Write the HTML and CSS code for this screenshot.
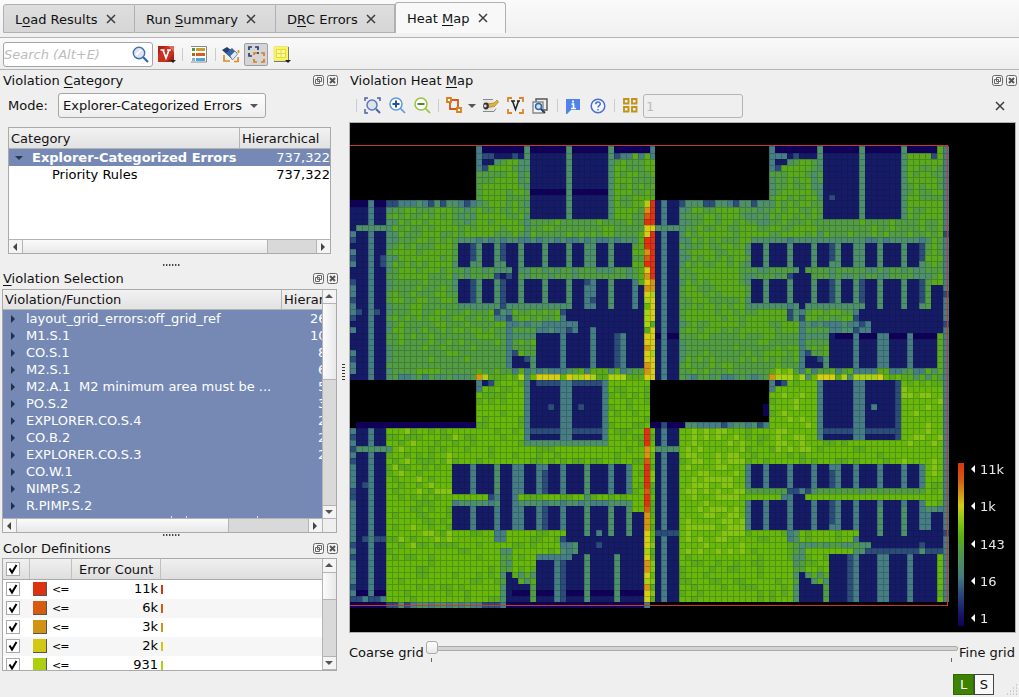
FILE: index.html
```html
<!DOCTYPE html>
<html lang="en">
<head>
<meta charset="utf-8">
<title>Heat Map</title>
<link rel="stylesheet" href="styles.css">
</head>
<body>
<svg width="0" height="0" class="defs">
  <symbol id="x" viewBox="0 0 10 10"><path d="M1 1l8 8M9 1l-8 8" stroke="#3c3c3c" stroke-width="1.5" fill="none"/></symbol>
  <symbol id="float" viewBox="0 0 11 11"><rect x=".5" y=".5" width="10" height="10" rx="2" fill="#f4f4f4" stroke="#666"/><path d="M4.5 2.5h4v4h-4zM2.5 4.5h4v4h-4z" fill="#f4f4f4" stroke="#666"/></symbol>
  <symbol id="close" viewBox="0 0 11 11"><rect x=".5" y=".5" width="10" height="10" rx="2" fill="#f4f4f4" stroke="#666"/><path d="M3 3l5 5M8 3l-5 5" stroke="#555" stroke-width="2"/></symbol>
  <symbol id="check" viewBox="0 0 14 14"><rect x=".5" y=".5" width="13" height="13" fill="#fff" stroke="#aaa"/><path d="M3.5 6.5l2.5 4L10.500 3" stroke="#000" stroke-width="2" fill="none"/></symbol>
</svg>
<div class="window">
  <nav class="tabs">
    <div class="tab t1">L<u>o</u>ad Results<svg><use href="#x"/></svg></div>
    <div class="tab t2">Run <u>S</u>ummary<svg><use href="#x"/></svg></div>
    <div class="tab t3">D<u>R</u>C Errors<svg><use href="#x"/></svg></div>
    <div class="tab active">Heat <u>M</u>ap<svg><use href="#x"/></svg></div>
  </nav>
  <div class="toolbar">
    <div class="search">Search (Alt+E)
      <svg width="17" height="17" viewBox="0 0 17 17"><circle cx="7" cy="7" r="5.700" fill="#dde4ee" stroke="#3f6fb5" stroke-width="1.400"/><path d="M4 9l5-5" stroke="#fff" stroke-width="2"/><path d="M11 11l5 5" stroke="#3566b0" stroke-width="2.200"/></svg>
    </div>
    <svg class="i-v" width="18" height="17" viewBox="0 0 18 17"><path d="M0 0h16v16H0z" fill="#c8301f"/><path d="M0 0h8L0 8zM8 16l8-8v8z" fill="#a92416"/><path d="M10 0h6v6z" fill="#dc6a55"/><path d="M2.500 4h4M9 4h4M5 4l3 8 3-8" stroke="#fff" stroke-width="1.700" fill="none"/><path d="M12 14h6l-3 3z" fill="#222"/></svg>
    <i class="sep s1"></i>
    <svg class="i-list" width="16" height="17" viewBox="0 0 16 17"><path d="M0 .5h15.500v15.500H0" fill="#fff" stroke="#888"/><path d="M1 2h3v3H1z" fill="#4a9a3c"/><path d="M1 7h3v3H1z" fill="#c85a1e"/><path d="M1 12h3v3H1z" fill="#7fb7d9"/><path d="M5 2h9v3H5z" fill="#c99b33"/><path d="M5 7h9v3H5z" fill="#d65d20"/><path d="M5 12h9v3H5z" fill="#4fa5d0"/></svg>
    <i class="sep s2"></i>
    <svg class="i-er" width="18" height="17" viewBox="0 0 18 17"><path d="M2 9v6h6M16.500 4v3M16 11v4.500h-4" stroke="#e08a22" stroke-width="1.700" fill="none"/><path d="M0 4l5-3 8 6-4 5z" fill="#24406e"/><path d="M4 7l6-5 5 5-5 6z" fill="#3c64a8"/><path d="M8 10l5-5 2.500 3-5 6z" fill="#e4eaf4" stroke="#4a6698" stroke-width=".7"/></svg>
    <span class="pressed"><svg width="17" height="17" viewBox="0 0 17 17" fill="none" stroke-width="1.700"><path d="M1 4V1h3M7 1h3v3M1 7v3h3" stroke="#24406e"/><path d="M10 6v2" stroke="#24406e"/><path d="M6 9V7h3M13 7h3v3M6 13v3h3M16 13v3h-3" stroke="#dc7c1c"/></svg></span>
    <svg class="i-grid" width="18" height="17" viewBox="0 0 18 17"><path d="M1 .5h14.500v14.500H1z" fill="#f8f560" stroke="#e8e488"/><path d="M3.500 3.500h9v8h-9zM8 3v9M3 7.500h10" fill="#fcfa9c" stroke="#e2da3c"/><path d="M1 15.500h14.500V1" fill="none" stroke="#777"/><path d="M12 14h6l-3 3z" fill="#222"/></svg>
  </div>
  <main class="main">
    <aside class="left">
      <div class="title first"><span>Violation <u>C</u>ategory</span><svg><use href="#float"/></svg><svg><use href="#close"/></svg></div>
      <div class="mode"><label>Mode:</label><div class="combo">Explorer-Categorized Errors<b class="dn"></b></div></div>
      <div class="tree cat">
        <div class="hdr"><span class="c1">Category</span><span class="c2">Hierarchical</span></div>
        <div class="row sel"><b class="dn dark"></b><strong>Explorer-Categorized Errors</strong><em>737,322</em></div>
        <div class="row child"><span>Priority Rules</span><em>737,322</em></div>
        <div class="hs"><span class="btn"><b class="lt"></b></span><span class="thumb"></span><span class="btn end"><b class="rt"></b></span></div>
      </div>
      <div class="dots d1"></div>
      <div class="title"><span><u>V</u>iolation Selection</span><svg><use href="#float"/></svg><svg><use href="#close"/></svg></div>
      <div class="tree vio">
        <div class="body">
          <div class="hdr"><span class="c1">Violation/Function</span><span class="c2">Hierarchical</span></div>
          <div class="rows">
            <div class="row"><b class="rt"></b><span>layout_grid_errors:off_grid_ref</span><em>261</em></div>
            <div class="row"><b class="rt"></b><span>M1.S.1</span><em>100</em></div>
            <div class="row"><b class="rt"></b><span>CO.S.1</span><em class="n1">80</em></div>
            <div class="row"><b class="rt"></b><span>M2.S.1</span><em class="n1">60</em></div>
            <div class="row"><b class="rt"></b><span>M2.A.1&nbsp; M2 minimum area must be ...</span><em class="n1">50</em></div>
            <div class="row"><b class="rt"></b><span>PO.S.2</span><em class="n1">30</em></div>
            <div class="row"><b class="rt"></b><span>EXPLORER.CO.S.4</span><em class="n1">20</em></div>
            <div class="row"><b class="rt"></b><span>CO.B.2</span><em class="n1">20</em></div>
            <div class="row"><b class="rt"></b><span>EXPLORER.CO.S.3</span><em class="n1">20</em></div>
            <div class="row"><b class="rt"></b><span>CO.W.1</span></div>
            <div class="row"><b class="rt"></b><span>NIMP.S.2</span></div>
            <div class="row"><b class="rt"></b><span>R.PIMP.S.2</span></div>
            <div class="peek"><i></i><i></i><i></i></div>
          </div>
          <div class="hs"><span class="btn"><b class="lt"></b></span><span class="thumb"></span><span class="btn end"><b class="rt"></b></span></div>
        </div>
        <div class="vs"><span class="btn"><b class="up"></b></span><span class="thumb"></span><span class="btn end"><b class="dn"></b></span><span class="corner"></span></div>
      </div>
      <div class="dots d2"></div>
      <div class="title third"><span>Color Definitions</span><svg><use href="#float"/></svg><svg><use href="#close"/></svg></div>
      <div class="tree col">
        <div class="body">
          <div class="chdr"><span class="k1"><svg><use href="#check"/></svg></span><span class="k2"></span><span class="k3">Error Count</span></div>
          <div class="crow"><svg><use href="#check"/></svg><i class="sw c-red"></i><s>&lt;=</s><em>11k</em><i class="bar c-red"></i></div>
          <div class="crow alt"><svg><use href="#check"/></svg><i class="sw c-or"></i><s>&lt;=</s><em>6k</em><i class="bar c-or"></i></div>
          <div class="crow"><svg><use href="#check"/></svg><i class="sw c-am"></i><s>&lt;=</s><em>3k</em><i class="bar c-am"></i></div>
          <div class="crow alt"><svg><use href="#check"/></svg><i class="sw c-ye"></i><s>&lt;=</s><em>2k</em><i class="bar c-ye"></i></div>
          <div class="crow"><svg><use href="#check"/></svg><i class="sw c-li"></i><s>&lt;=</s><em>931</em><i class="bar c-li"></i></div>
        </div>
        <div class="vs"><span class="btn"><b class="up"></b></span><span class="thumb"></span><span class="btn end"><b class="dn"></b></span></div>
      </div>
    </aside>
    <div class="split"><div class="vdots"></div></div>
    <section class="right">
      <div class="title first"><span>Violation Heat <u>M</u>ap</span><svg><use href="#float"/></svg><svg><use href="#close"/></svg></div>
      <div class="htools">
        <i class="sep"></i>
        <svg class="z1" width="17" height="17" viewBox="0 0 17 17" fill="none"><path d="M1 4V1h3M13 1h3v3M1 12v4h3" stroke="#4a62a8" stroke-width="1.500"/><circle cx="8" cy="8" r="5" fill="#dde3ee" stroke="#5a78bd" stroke-width="1.500"/><path d="M12 12l4 4" stroke="#4a62a8" stroke-width="2"/></svg>
        <svg class="z2" width="17" height="17" viewBox="0 0 17 17" fill="none"><circle cx="7" cy="7" r="6" fill="#fff" stroke="#5b9bd8" stroke-width="1.500"/><path d="M3.500 7h7M7 3.500v7" stroke="#27509a" stroke-width="2"/><path d="M11.500 11.500l4.500 4.500" stroke="#5b9bd8" stroke-width="1.700"/></svg>
        <svg class="z3" width="17" height="17" viewBox="0 0 17 17" fill="none"><circle cx="7" cy="7" r="6" fill="#fff" stroke="#96c43c" stroke-width="1.500"/><path d="M3.500 7h7" stroke="#4c8c20" stroke-width="2"/><path d="M11.500 11.500l4.500 4.500" stroke="#96c43c" stroke-width="1.700"/></svg>
        <i class="sep"></i>
        <svg class="z4" width="17" height="17" viewBox="0 0 17 17" fill="none" stroke-width="1.800"><path d="M3 3h9v9H4V3" stroke="#cf5a1a"/><path d="M1 1h4v4H1zM11 11h4v4h-4z" fill="#fff" stroke="#d8801c"/></svg>
        <b class="dn"></b>
        <svg class="z5" width="17" height="15" viewBox="0 0 17 15"><path d="M1 1.500h10M1 13.500h11l2-3" fill="none" stroke="#888"/><path d="M1 2h11v11H1z" fill="#e6e6e6"/><path d="M5 6l7-1 3-3 1.500 2-4 4.500-7 1z" fill="#dcb23c" stroke="#a87c24" stroke-width=".7"/><ellipse cx="4" cy="8" rx="2.800" ry="3.400" fill="#333"/><circle cx="3.300" cy="8" r="1.400" fill="#ddd"/></svg>
        <svg class="z6" width="17" height="17" viewBox="0 0 17 17" fill="none"><path d="M1 5V1h4M12 1h4v4M1 12v4h4M16 12v4h-4" stroke="#e08426" stroke-width="1.800"/><path d="M4 4h4M10 4h3M5.500 4l3 8.500L11.500 4" stroke="#222" stroke-width="1.500"/></svg>
        <svg class="z7" width="16" height="16" viewBox="0 0 16 16" fill="none"><path d="M4 1h11v11H4z" fill="#eee" stroke="#555" stroke-width="1.400"/><path d="M1 4h10v11H1z" fill="#f5f5f5" stroke="#888" stroke-width="1.400"/><circle cx="6.500" cy="8.500" r="3" fill="#cfe1f4" stroke="#2e65a8" stroke-width="1.500"/><path d="M9 11l4 4" stroke="#1c3f78" stroke-width="2"/></svg>
        <i class="sep"></i>
        <svg class="z8" width="15" height="16" viewBox="0 0 15 16"><path d="M0 1h14v11H5l-4 4H0z" fill="#4f83ea"/><path d="M7 2.500v2M5.500 6H7.500v4M5 10.500h5" stroke="#fff" stroke-width="1.700" fill="none"/></svg>
        <svg class="z9" width="16" height="16" viewBox="0 0 16 16" fill="none"><circle cx="8" cy="8" r="6.800" fill="#f4f7ff" stroke="#4a6fd0" stroke-width="1.500"/><path d="M5.700 6.300c0-3 4.600-3 4.600-.3 0 1.600-2.300 1.600-2.300 3.500M8 11v1.600" stroke="#4a6fd0" stroke-width="1.500"/></svg>
        <i class="sep"></i>
        <svg class="z10" width="15" height="15" viewBox="0 0 15 15"><path d="M1 1h4.500v4.500H1zM9 1h4.500v4.500H9zM1 9h4.500v4.500H1zM9 9h4.500v4.500H9z" fill="none" stroke="#c09418" stroke-width="1.900"/></svg>
        <div class="spin">1</div>
        <svg class="xx"><use href="#x"/></svg>
      </div>
      <div class="map">
        <canvas id="heat" width="665" height="509"></canvas>
        <div class="legend"><div class="ramp"></div>
          <ul><li><b></b>11k</li><li><b></b>1k</li><li><b></b>143</li><li><b></b>16</li><li><b></b>1</li></ul></div>
      </div>
      <div class="slider"><span>Coarse grid</span><div class="track"><i class="knob"></i><i class="tick a"></i><i class="tick b"></i></div><span class="fine">Fine grid</span></div>
      <div class="status"><span class="on">L</span><span class="off">S</span>
        <svg width="12" height="12" viewBox="0 0 12 12"><path d="M10 1h1M7 4h1M10 4h1M4 7h1M7 7h1M10 7h1M1 10h1M4 10h1M7 10h1M10 10h1" stroke="#aaa"/></svg></div>
    </section>
  </main>
</div>
<script src="heat.js"></script>
</body>
</html>
```
FILE: styles.css
```css
* { box-sizing: border-box; }
body { margin: 0; font: 13px/16px "DejaVu Sans", sans-serif; color: #111; background: #efefef; }
.defs { position: absolute; }
.window { width: 1019px; height: 697px; overflow: hidden; display: flex; flex-direction: column; }
u { text-decoration: underline; text-underline-offset: 2px; text-decoration-thickness: 1px; }
em, s, i { font-style: normal; text-decoration: none; }
svg { flex: none; display: block; }
.tabs { height: 38px; padding: 2px 3px 0; display: flex; align-items: flex-start; background: linear-gradient(#fafafa, #f0f0f0); border-bottom: 1px solid #b4b4b4; }
.tab { height: 29px; margin-top: 2px; display: flex; align-items: center; border: 1px solid #b0b0b0; border-left-width: 0; background: linear-gradient(#dedede, #d6d6d6); padding: 3px 0 0 12px; white-space: pre; }
.tab svg { width: 10px; height: 10px; margin-left: 8px; margin-top: -2px; }
.t1 { width: 132px; border-left-width: 1px; border-top-left-radius: 3px; padding-left: 11px; }
.t2 { width: 141px; padding-left: 11px; }
.t3 { width: 119px; padding-left: 11px; }
.active { width: 111px; height: 31px; margin-top: 0; border-left-width: 1px; border-bottom: 0; border-radius: 3px 3px 0 0; background: #f8f8f8; padding: 2px 0 0 11px; }
.active svg { margin-left: 9px; }
.toolbar { height: 32px; flex: none; display: flex; align-items: center; padding: 2px 0 0 3px; background: linear-gradient(#f9f9f9, #eee); border-bottom: 1px solid #b4b4b4; }
.search { width: 150px; height: 25px; border: 1px solid #a6a6a6; border-radius: 3px; background: #fff; color: #bcbcbc; font-style: italic; display: flex; align-items: center; justify-content: space-between; padding-right: 3px; white-space: nowrap; }
.i-v { margin-left: 5px; }
.sep { width: 1px; height: 13px; background: #ccc; border-right: 0; flex: none; }
.s1 { margin-left: 6px; } .i-list { margin-left: 8px; } .s2 { margin-left: 8px; } .i-er { margin-left: 6px; }
.pressed { width: 24px; height: 23px; margin-left: 4px; border: 1px solid #a0a0a0; border-radius: 2px; background: #d5d5d5; display: flex; align-items: center; justify-content: center; }
.i-grid { margin-left: 5px; }
.main { flex: 1; display: flex; min-height: 0; }
.left { width: 340px; flex: none; }
.split { width: 9px; flex: none; }
.vdots { width: 3px; height: 18px; margin: 294px 0 0 2px; background: repeating-linear-gradient(#333 0 1px, transparent 1px 3px); }
.title { height: 20px; display: flex; align-items: center; padding: 0 2px 1px 3px; }
.title.first { margin-top: 1px; }
.title.third { padding: 1px 2px 0 3px; }
.title span { flex: 1; }
.title svg { width: 11px; height: 11px; margin-left: 3px; }
.mode { height: 25px; margin-top: 2px; display: flex; align-items: center; padding-left: 8px; }
.mode label { width: 50px; }
.combo { width: 208px; height: 25px; border: 1px solid #a6a6a6; border-radius: 3px; background: linear-gradient(#fdfdfd, #eee); display: flex; align-items: center; justify-content: space-between; padding: 0 7px 0 4px; white-space: nowrap; }
.dn, .up, .lt, .rt { width: 0; height: 0; border: 4px solid transparent; flex: none; }
.dn { border-top-color: #555; border-bottom: 0; }
.up { border-bottom-color: #555; border-top: 0; }
.lt { border-right-color: #444; border-left: 0; }
.rt { border-left-color: #444; border-right: 0; }
.tree { border: 1px solid #aaa; background: #fff; overflow: hidden; }
.hdr { display: flex; background: linear-gradient(#f2f2f2, #e2e2e2); border-bottom: 1px solid #b4b4b4; line-height: 20px; overflow: hidden; }
.hdr .c2 { border-left: 1px solid #b4b4b4; padding-left: 2px; flex: 1; overflow: hidden; }
.cat { width: 323px; height: 127px; margin: 9px 0 0 8px; display: flex; flex-direction: column; }
.cat .hdr { height: 21px; line-height: 22px; }
.cat .c1 { width: 230px; padding-left: 2px; }
.row { height: 17px; line-height: 17px; display: flex; align-items: center; white-space: nowrap; }
.cat em { margin-left: auto; }
.sel { background: #7689b4; color: #fff; }
.sel .dark { margin: 0 9px 0 6px; border-top-color: #263650; }
.child span { padding-left: 43px; }
.child { color: #000; }
.hs { height: 14px; border-top: 1px solid #b4b4b4; background: #d9d9d9; display: flex; margin-top: auto; flex: none; }
.btn { width: 14px; background: #f4f4f4; border-right: 1px solid #b4b4b4; display: flex; align-items: center; justify-content: center; flex: none; }
.hs .btn { padding-right: 2px; }
.hs .end { margin-left: auto; border-right: 0; border-left: 1px solid #b4b4b4; padding-right: 2px; }
.hs .thumb { width: 245px; background: linear-gradient(#fbfbfb, #e8e8e8); border-right: 1px solid #b4b4b4; }
.dots { width: 18px; height: 2px; margin: 0 0 0 163px; background: repeating-linear-gradient(90deg, #444 0 1px, #aaa 1px 2px, transparent 2px 3px); }
.d1 { margin-top: 10px; margin-bottom: 3px; }
.vio { width: 335px; height: 244px; margin: 0 0 0 2px; display: flex; }
.body { flex: 1; min-width: 0; display: flex; flex-direction: column; }
.vio .hdr { height: 20px; flex: none; }
.vio .c1 { width: 278px; flex: none; padding-left: 2px; }
.rows { height: 208px; background: #7689b4; color: #fff; overflow: hidden; }
.rows .row { position: relative; overflow: hidden; padding-left: 8px; }
.rows .rt { border-left-color: #1f2f4c; margin-right: 11px; }
.rows em { position: absolute; left: 307px; }
.rows .n1 { left: 315px; }
.peek { display: flex; padding-left: 168px; gap: 14px; height: 4px; align-items: flex-end; }
.peek i { width: 1px; height: 2px; background: #dfe5f0; }
.peek i:last-child { margin-left: 56px; }
.vio .hs { height: 14px; }
.vio .hs .thumb { width: 212px; }
.vs { width: 14px; flex: none; border-left: 1px solid #b4b4b4; background: #d9d9d9; display: flex; flex-direction: column; }
.vs .btn { width: 13px; height: 14px; border-right: 0; border-bottom: 1px solid #b4b4b4; padding: 0 1px 1px 0; }
.vs .thumb { height: 76px; background: linear-gradient(90deg, #fbfbfb, #e8e8e8); border-bottom: 1px solid #b4b4b4; }
.vs .end { margin-top: auto; border-top: 1px solid #b4b4b4; }
.corner { height: 13px; background: #efefef; flex: none; }
.d2 { margin-top: 1px; margin-bottom: 2px; }
.col { width: 335px; height: 113px; margin-left: 2px; display: flex; }
.chdr { height: 21px; flex: none; display: flex; line-height: 21px; background: linear-gradient(#f0f0f0, #dedede); border-bottom: 1px solid #aaa; }
.chdr span { border-right: 1px solid #c0c0c0; }
.k1 { width: 27px; padding: 3px 0 0 3px; } .k2 { width: 42px; } .k3 { width: 89px; padding-left: 7px; }
.chdr svg, .crow svg { width: 14px; height: 14px; }
.crow { height: 19px; flex: none; display: flex; align-items: center; padding: 0 0 1px 3px; color: #000; }
.alt { background: #f6f6f6; }
.sw { width: 14px; height: 14px; margin-left: 13px; border-right: 1px solid #555; border-bottom: 1px solid #555; }
.crow s { width: 22px; padding-left: 5px; font-size: 11px; letter-spacing: -1px; margin-top: 2px; }
.crow em { width: 89px; text-align: right; }
.bar { width: 2px; height: 9px; margin-left: 3px; }
.c-red { background-color: #dc3210; } .c-or { background-color: #d65a10; } .c-am { background-color: #d29214; } .c-ye { background-color: #d2c814; } .c-li { background-color: #acd010; }
.col .btn { height: 14px; } .col .thumb { height: 27px; }
.right { width: 670px; display: flex; flex-direction: column; }
.right .title { padding: 0 2px 1px 1px; flex: none; }
.htools { height: 31px; flex: none; display: flex; align-items: center; padding: 0 0 2px 7px; }
.z1 { margin-left: 7px; } .z2, .z3 { margin-left: 8px; } .z3 + .sep { margin-left: 7px; }
.z4 { margin-left: 7px; } .htools .dn { margin-left: 5px; } .z5 { margin-left: 6px; } .z6 { margin-left: 8px; } .z7 { margin-left: 8px; }
.z7 + .sep { margin-left: 9px; } .z8 { margin-left: 8px; } .z9 { margin-left: 9px; } .z9 + .sep { margin-left: 8px; } .z10 { margin-left: 8px; }
.spin { width: 100px; height: 24px; margin-left: 5px; margin-top: 1px; border: 1px solid #b4b4b4; border-radius: 3px; line-height: 23px; padding-left: 2px; color: #bbb; }
.xx { width: 10px; height: 10px; margin-left: auto; margin-right: 14px; }
.map { width: 667px; height: 511px; border: 1px solid #b0b0b0; position: relative; flex: none; background: #000; }
.map canvas { display: block; }
.legend { position: absolute; left: 608px; top: 340px; display: flex; color: #e8e8e8; }
.ramp { width: 6px; height: 163px; background: linear-gradient(#dc3210, #d25a14 10%, #d29214 18%, #d2cc14 26%, #84c414 36%, #5ab00e 45%, #509a44 54%, #4a8868 63%, #447a80 70%, #2b4a78 80%, #141a66 92%, #10005a); }
.legend ul { list-style: none; margin: -2px 0 0 7px; padding: 0; }
.legend li { height: 37.300px; display: flex; align-items: flex-start; line-height: 17px; gap: 5px; }
.legend b { border: 4px solid transparent; border-right-color: #fff; border-left: 0; margin-top: 4px; }
.slider { height: 40px; flex: none; display: flex; align-items: center; }
.slider span { width: 77px; flex: none; white-space: nowrap; }
.slider .fine { width: 60px; margin-left: 1px; }
.track { width: 532px; flex: none; height: 5px; border: 1px solid #aaa; border-radius: 2px; background: #d3d3d3; position: relative; margin-top: -9px; }
.knob { position: absolute; left: -1px; top: -6px; width: 12px; height: 13px; border: 1px solid #aaa; border-radius: 3px; background: linear-gradient(#fff, #e8e8e8); }
.tick { position: absolute; top: 11px; width: 1px; height: 4px; background: #666; }
.tick.a { left: 4px; } .tick.b { right: 5px; }
.status { display: flex; padding-left: 604px; align-items: flex-start; margin-top: 1px; }
.status span { width: 21px; height: 21px; border: 1px solid #2f6a00; text-align: center; line-height: 20px; }
.on { background: #3d8200; color: #fff; }
.status .off { border-color: #444; background: #f8f8f8; width: 20px; }
.status svg { margin: 10px 0 0 12px; }
```
FILE: heat.js
```js
const COLS = 100, ROWS = 77;
const COLORS = {
  '.': '#000', a: '#10005a', b: '#151b66', c: '#2c4c7a', d: '#467e84', e: '#4d906a',
  f: '#529c42', g: '#5aaa1c', h: '#68b80c', i: '#86c414', j: '#aad214', k: '#d6ce14',
  l: '#d69414', m: '#d65a14', n: '#de3210'
};
const grid = Array.from({ length: ROWS }, () => Array(COLS).fill('g'));
let seed = 71;
const rnd = () => (seed = (seed * 16807) % 2147483647) / 2147483647;

// Fills an inclusive cell range; several levels are mixed at random.
function put(c0, c1, r0, r1, levels) {
  for (let r = r0; r <= r1; r++)
    for (let c = c0; c <= c1; c++)
      grid[r][c] = levels[Math.floor(rnd() * levels.length)];
}
function spans(list, r0, r1, level) {
  for (const [a, b] of list) put(a, b, r0, r1, level);
}
// Paints a vertical run, one character per row.
function column(c, r0, text) {
  [...text].forEach((ch, k) => { grid[r0 + k][c] = ch; });
}

// Ground
put(0, 99, 0, 38, 'ggf');
put(7, 26, 22, 30, 'gff');
put(7, 26, 31, 37, 'ffffg');
put(56, 75, 31, 37, 'ffffg');
put(0, 99, 39, 76, 'hhhg');
put(56, 65, 47, 67, 'hhhii');
put(7, 17, 47, 66, 'hhhhhggghi');
put(71, 77, 40, 50, 'hhhhi');
put(92, 98, 40, 54, 'hhhhi');

for (const o of [0, 49]) {
  // Upper macros
  put(21 + o, 21 + o, 0, 3, 'd'); put(21 + o, 21 + o, 4, 9, 'ef');
  put(22 + o, 28 + o, 0, 0, 'a'); put(22 + o, 28 + o, 1, 1, 'bcbd');
  put(22 + o, 23 + o, 2, 2, 'b'); put(24 + o, 25 + o, 2, 2, 'ef');
  put(22 + o, 22 + o, 3, 3, 'c'); put(22 + o, 23 + o, 4, 5, 'f');
  put(28 + o, 28 + o, 2, 6, 'ef');
  put(29 + o, 43 + o, 0, 11, 'e'); put(29 + o, 29 + o, 4, 14, 'ef');
  spans([[30 + o, 35 + o], [37 + o, 42 + o]], 0, 11, 'b');
  spans([[30 + o, 35 + o], [37 + o, 42 + o]], 0, 0, 'a');
  put(44 + o, 48 + o, 0, 0, 'a'); put(44 + o, 48 + o, 1, 1, 'cddg');
  put(30 + o, 48 + o, 12, 14, 'fffg');
  put(18 + o, 47 + o, 15, 15, 'eed');
  put(17 + o, 20 + o, 10, 12, 'ef');
  // Memory rows
  put(17 + o, 46 + o, 16, 26, 'e');
  put(17 + o, 47 + o, 20, 21, 'ffe');
  put(6 + o, 20 + o, 9, 9, 'edec');
  put(6 + o, 6 + o, 10, 37, 'eef'); put(7 + o, 7 + o, 10, 20, 'egf');
  put(17 + o, 17 + o, 16, 27, 'fe');
  // Lower cluster
  put(24 + o, 26 + o, 26, 28, 'dce');
  put(27 + o, 34 + o, 27, 28, 'ggf'); put(27 + o, 37 + o, 29, 30, 'dde');
  put(35 + o, 36 + o, 27, 29, 'dbc');
  put(36 + o, 48 + o, 27, 30, 'b'); put(35 + o, 37 + o, 29, 30, 'dcd');
  put(26 + o, 26 + o, 29, 37, 'd');
  put(27 + o, 30 + o, 30, 34, 'ffgf');
  put(27 + o, 30 + o, 31, 31, 'e');
  put(27 + o, 27 + o, 34, 34, 'c'); put(27 + o, 28 + o, 35, 35, 'b'); put(29 + o, 29 + o, 35, 35, 'c');
  put(27 + o, 29 + o, 36, 36, 'b'); put(30 + o, 30 + o, 35, 36, 'e');
  put(31 + o, 48 + o, 31, 36, 'd');
  put(26 + o, 48 + o, 37, 37, 'dfgde');
  put(6 + o, 20 + o, 38, 38, 'edfe');
  put(21 + o, 48 + o, 38, 38, 'gghje');
}
const topA = [[18, 19], [22, 23], [26, 27], [29, 31], [33, 35], [37, 38], [41, 42], [44, 46]];
const topB = [[67, 68], [70, 72], [74, 76], [78, 79], [82, 83], [86, 87], [89, 91], [93, 94]];
for (const s of [topA, topB]) { spans(s, 16, 19, 'b'); spans(s, 22, 25, 'b'); }
spans([[20, 20], [25, 25], [80, 80], [95, 95]], 16, 18, 'c');
spans([[20, 20], [25, 25], [80, 80], [95, 95], [85, 85]], 22, 25, 'c');
put(24, 26, 21, 21, 'cb'); put(27, 27, 20, 21, 'b'); put(73, 76, 21, 21, 'cb'); put(75, 75, 20, 26, 'b');
spans([[37, 38], [41, 42], [44, 46], [86, 87], [89, 91], [93, 94]], 26, 26, 'b');
spans([[39, 40]], 22, 26, 'ddc');
put(48, 48, 23, 30, 'b'); put(97, 98, 23, 30, 'b'); put(47, 47, 22, 26, 'd'); put(96, 96, 22, 26, 'f');
put(47, 48, 27, 30, 'b');
spans([[31, 34], [36, 39], [41, 43], [46, 48], [80, 83], [85, 87], [90, 92], [94, 97]], 31, 36, 'b');
put(44, 44, 31, 36, 'c'); put(40, 40, 30, 36, 'd');
spans([[81, 83], [85, 87], [90, 92], [94, 97]], 31, 31, 'a');
spans([[30, 35], [37, 42]], 7, 7, 'a');
grid[8][80] = 'c';
put(31, 39, 38, 38, 'jjkhe'); put(84, 88, 38, 38, 'kj'); put(78, 80, 38, 38, 'k');
column(21, 38, 'l'); column(31, 38, 'k'); column(70, 38, 'l'); put(71, 73, 38, 38, 'j');
put(71, 73, 37, 37, 'ih');

// Lower macros
for (const o of [0, 49]) {
  put(29 + o, 42 + o, 39, 48, 'd');
  put(29 + o, 42 + o, 49, 49, o ? 'hg' : 'e');
  spans([[30 + o, 34 + o], [37 + o, 41 + o]], 39, 48, 'b');
  spans([[30 + o, 34 + o], [37 + o, 41 + o]], 47, 47, 'c');
  column(38 + o, 43, o ? 'd' : 'c');
  put(22 + o, 22 + o, 39, 39, 'b'); put(21 + o, 21 + o, 39, 40, 'd'); put(23 + o, 23 + o, 39, 39, 'c');
  put(17 + o, 46 + o, 53, 63, 'd');
  put(24 + o, 25 + o, 64, 65, 'de');
  put(35 + o, 36 + o, 65, 66, 'dc');
  put(36 + o, 48 + o, 64, 68, 'b');
  put(35 + o, 37 + o, 66, 67, 'de');
  put(31 + o, 48 + o, 68, 75, 'd');
  put(25 + o, 26 + o, 67, 70, 'ef'); put(25 + o, 25 + o, 71, 75, 'ef');
  put(27 + o, 30 + o, 71, 72, 'eg'); put(30 + o, 30 + o, 73, 75, 'f');
  put(26 + o, 26 + o, 71, 75, 'b'); put(27 + o, 27 + o, 72, 75, 'b'); put(28 + o, 29 + o, 73, 75, 'b');
}
put(30, 34, 39, 39, 'cb'); put(37, 41, 39, 39, 'c'); column(33, 43, 'c');
put(91, 91, 39, 48, 'c');
const lowA = [[17, 19], [21, 23], [25, 26], [29, 30], [33, 34], [36, 38], [40, 42], [44, 45]];
spans(lowA, 53, 57, 'b'); spans(lowA, 60, 63, 'b');
put(17, 22, 58, 58, 'h'); put(28, 46, 58, 58, 'hhg'); put(17, 46, 59, 59, 'eed'); put(23, 25, 58, 58, 'dc'); put(25, 26, 58, 59, 'b');
put(32, 32, 54, 57, 'c'); put(32, 32, 60, 63, 'c'); put(24, 24, 53, 57, 'e'); put(39, 39, 53, 64, 'e');
const lowB = [[67, 68], [70, 72], [74, 76], [78, 79], [82, 83], [85, 87], [89, 91], [93, 94]];
spans(lowB, 53, 56, 'b'); spans(lowB, 59, 63, 'b');
put(66, 95, 57, 57, 'fef'); put(66, 95, 58, 58, 'h'); put(73, 76, 57, 57, 'dc'); put(74, 75, 58, 58, 'b'); put(72, 73, 58, 58, 'd');
put(80, 80, 54, 56, 'c'); put(80, 80, 59, 62, 'c');
put(47, 48, 61, 67, 'b'); put(97, 98, 61, 67, 'b'); put(96, 98, 60, 60, 'de'); put(96, 96, 61, 63, 'd');
spans([[39, 39], [43, 43], [46, 46], [88, 88], [92, 92]], 60, 64, 'e');
put(74, 86, 66, 66, 'fe'); put(86, 98, 67, 67, 'c'); put(95, 95, 66, 67, 'ce');
spans([[31, 33], [36, 38], [40, 43], [45, 48], [80, 82], [85, 87], [90, 92], [94, 97]], 68, 75, 'b');
put(31, 36, 68, 68, 'd'); put(35, 35, 69, 75, 'c'); put(83, 83, 68, 75, 'c');
put(39, 39, 68, 75, 'e'); put(44, 44, 68, 75, 'e');
spans([[27, 29], [31, 33], [36, 38], [40, 43], [45, 48]], 74, 74, 'a');
column(41, 64, 'dbc');

// Routing channels
spans([[1, 2], [4, 5], [51, 51], [53, 54]], 9, 38, 'b');
spans([[1, 2], [4, 5], [51, 51], [53, 54]], 46, 75, 'b');
put(0, 0, 9, 38, 'bdc'); put(0, 0, 47, 75, 'dcd');
spans([[3, 3], [52, 52]], 9, 38, 'd'); spans([[3, 3], [52, 52]], 46, 75, 'd');
put(1, 6, 13, 13, 'e'); put(51, 55, 13, 13, 'e'); put(1, 6, 50, 50, 'e'); put(51, 54, 50, 50, 'e');
spans([[0, 2], [4, 5]], 9, 9, 'a'); spans([[51, 51], [53, 54]], 31, 31, 'a');
spans([[1, 2], [4, 5]], 74, 74, 'a'); put(1, 5, 75, 75, 'cd'); put(51, 54, 64, 64, 'c');
put(2, 2, 65, 65, 'c'); put(4, 5, 65, 65, 'c'); put(1, 1, 27, 27, 'c'); put(4, 4, 27, 27, 'c'); column(5, 18, 'cc'); column(2, 56, 'c');
put(99, 99, 0, 75, 'd'); put(99, 99, 14, 14, 'c'); put(99, 99, 24, 24, 'c'); put(99, 99, 29, 29, 'c'); put(99, 99, 64, 64, 'c');

// Hot spine
put(49, 50, 0, 8, 'gf'); grid[0][49] = 'a'; grid[0][50] = 'd'; grid[1][50] = 'd';
column(49, 9, 'jlmnkknnlmnklklkjhjjjgkklkkllk');
column(50, 9, 'nnnnknnnnnnnnlljkkkkgkkkkjkkkk');
put(49, 49, 39, 46, 'hg');
column(49, 47, 'nnnllmnnnnmnnmlllkkkjkllkjlkk');
put(50, 50, 46, 75, 'hig');
put(50, 55, 46, 46, 'a'); put(56, 69, 46, 46, 'edc'); grid[46][52] = 'c';

// Openings and bottom edge
put(0, 20, 0, 8, '.'); put(51, 69, 0, 8, '.');
put(0, 20, 39, 45, '.'); put(50, 69, 39, 45, '.');
put(1, 20, 46, 46, 'a'); grid[46][0] = '.'; put(69, 69, 43, 44, 'a');
put(0, 99, 76, 76, '.'); put(0, 48, 76, 76, 'a'); put(6, 25, 76, 76, 'edec'); grid[76][49] = 'd';

const ctx = document.getElementById('heat').getContext('2d');
const PITCH = 5.988;
const px = c => Math.round(0.1 + c * PITCH);
const py = r => (r === 0 ? 23 : Math.round(23.9 + r * PITCH - (r === 9 ? 0.5 : 0)));
for (let r = 0; r < ROWS; r++)
  for (let c = 0; c < COLS; c++) {
    const v = grid[r][c], x = px(c), y = py(r), w = px(c + 1) - x, h = py(r + 1) - y;
    if (v === '.') continue;
    ctx.fillStyle = COLORS[v];
    ctx.fillRect(x, y, w, h);
    ctx.fillStyle = 'rgba(10,20,30,.22)';
    ctx.fillRect(x, y, w, 1);
    ctx.fillRect(x, y + 1, 1, h - 1);
  }
ctx.fillStyle = '#c8382c';
ctx.fillRect(0, 22, 598, 1);
ctx.fillRect(0, 482, 598, 1);
ctx.fillRect(597, 22, 1, 461);
```
